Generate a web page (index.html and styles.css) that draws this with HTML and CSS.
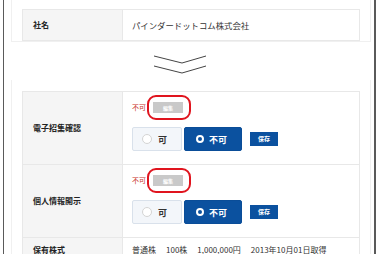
FILE: index.html
```html
<!DOCTYPE html>
<html lang="ja">
<head>
<meta charset="utf-8">
<title>株主情報</title>
<link rel="stylesheet" href="styles.css">
</head>
<body>
<div class="frame">
  <section class="panel panel-top">
    <table class="info">
      <tr class="row-name">
        <th>社名</th>
        <td class="company">パインダードットコム株式会社</td>
      </tr>
    </table>
  </section>

  <div class="arrow">
    <svg width="52" height="19" viewBox="0 0 52 19" aria-hidden="true">
      <polyline points="0,1 28,8 52,1" fill="none" stroke="#444" stroke-width="1"/>
      <polyline points="0,11 28,18 52,11" fill="none" stroke="#444" stroke-width="1"/>
    </svg>
  </div>

  <section class="panel panel-main">
    <table class="info">
      <tr>
        <th>電子招集確認</th>
        <td class="setting">
          <div class="status">
            <span class="status-text">不可</span>
            <span class="edit-wrap"><button class="edit" disabled>編集</button></span>
          </div>
          <div class="choice">
            <label class="radio"><span class="dot"></span>可</label>
            <label class="radio selected"><span class="dot"></span>不可</label>
            <button class="save">保存</button>
          </div>
        </td>
      </tr>
      <tr>
        <th>個人情報開示</th>
        <td class="setting">
          <div class="status">
            <span class="status-text">不可</span>
            <span class="edit-wrap"><button class="edit" disabled>編集</button></span>
          </div>
          <div class="choice">
            <label class="radio"><span class="dot"></span>可</label>
            <label class="radio selected"><span class="dot"></span>不可</label>
            <button class="save">保存</button>
          </div>
        </td>
      </tr>
      <tr class="row-stock">
        <th>保有株式</th>
        <td class="stock"><span>普通株</span><span>100株</span><span>1,000,000円</span><span>2013年10月01日取得</span></td>
      </tr>
    </table>
  </section>
</div>
</body>
</html>
```

FILE: styles.css
```css
html, body {
  margin: 0;
  padding: 0;
  background: #fff;
  overflow: hidden;
}

body {
  font-family: "Noto Sans CJK JP", "Noto Sans", sans-serif;
  color: #333;
}

.frame {
  margin-left: 3px;
  width: 373px;
  box-sizing: border-box;
  min-height: 300px;
  border-left: 1px solid #5a5a5a;
  border-right: 2px solid #5a5a5a;
}

.panel {
  margin: 0 3px 0 7px;
  border: 1px solid #f0f0f0;
  padding: 0 10px;
}

.panel-top {
  border-top: none;
  padding-top: 9px;
  padding-bottom: 0;
}

.panel-main {
  padding-top: 11px;
  border-top: none;
  border-bottom: none;
}

.arrow {
  display: flex;
  justify-content: center;
  padding: 13px 19px 6px 0;
  height: 19px;
}

.arrow svg {
  display: block;
}

.info {
  width: 100%;
  border-collapse: collapse;
}

.info th,
.info td {
  border: 1px solid #e8e8e8;
  font-size: 8px;
  line-height: 1;
}

.info th {
  width: 89px;
  background: #f5f5f5;
  text-align: left;
  padding: 0 0 0 10px;
  font-weight: bold;
  color: #222;
  vertical-align: middle;
}

.info td {
  padding: 0 0 0 9px;
  background: #fff;
}

.row-name td,
.row-name th {
  height: 30px;
}

.company {
  font-size: 8.4px !important;
  color: #333;
}

.setting {
  padding: 10px 9px 13px !important;
}

.status {
  display: flex;
  align-items: center;
  height: 11px;
}

.status-text {
  color: #c9332b;
  font-size: 7px;
  line-height: 1;
}

.edit-wrap {
  position: relative;
  margin-left: 7px;
  display: block;
}

.edit-wrap::after {
  content: "";
  position: absolute;
  top: -7px;
  bottom: -7px;
  left: -6px;
  right: -8px;
  border: 2px solid #e0141e;
  border-radius: 9px;
}

.edit {
  display: block;
  width: 30px;
  height: 11px;
  border: none;
  padding: 0;
  background: #c9c9c9;
  color: #fff;
  font-family: inherit;
  font-size: 5px;
  line-height: 11px;
  font-weight: bold;
}

.choice {
  display: flex;
  align-items: center;
  margin-top: 14px;
}

.radio {
  display: flex;
  align-items: center;
  box-sizing: border-box;
  width: 50px;
  height: 24px;
  padding-left: 9px;
  border: 1px solid #d9e1eb;
  border-radius: 2px;
  background: #f3f6fa;
  font-size: 9px;
  font-weight: bold;
  color: #333;
}

.radio .dot {
  width: 10px;
  height: 10px;
  box-sizing: border-box;
  border-radius: 50%;
  border: 1px solid #d4d4d4;
  background: #fff;
  margin-right: 6px;
}

.radio.selected {
  width: 58px;
  margin-left: 2px;
  padding-left: 11px;
  border-color: #0a4d98;
  background: #0b519f;
  color: #fff;
}

.radio.selected .dot {
  width: 8px;
  height: 8px;
  border: 2px solid #fff;
  background: #0b519f;
  margin-right: 5px;
}

.save {
  margin-left: 8px;
  width: 28px;
  height: 14px;
  padding: 0;
  border: none;
  background: #0b519f;
  color: #fff;
  font-family: inherit;
  font-size: 6px;
  font-weight: bold;
  line-height: 14px;
}

.row-stock th,
.row-stock td {
  height: 30px;
  vertical-align: top;
  padding-top: 8px;
}

.stock span {
  margin-right: 10px;
}
```
